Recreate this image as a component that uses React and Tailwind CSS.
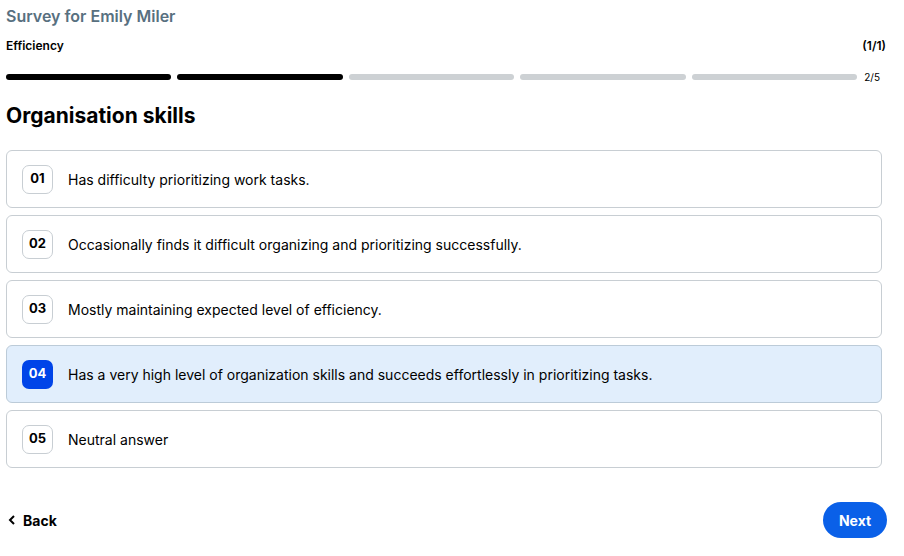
import { useState } from 'react'

const options = [
    { id: '01', text: 'Has difficulty prioritizing work tasks.' },
    { id: '02', text: 'Occasionally finds it difficult organizing and prioritizing successfully.' },
    { id: '03', text: 'Mostly maintaining expected level of efficiency.' },
    { id: '04', text: 'Has a very high level of organization skills and succeeds effortlessly in prioritizing tasks.' },
    { id: '05', text: 'Neutral answer' },
]

const steps = [true, true, false, false, false]

export default function App() {
    const [selected, setSelected] = useState('04')

    return (
        <div className="w-[904px] h-[556px] bg-white px-[6px] pt-[6px] font-['Inter','Liberation_Sans',sans-serif] text-black flex flex-col">
            <h2 className="text-[16px] font-semibold text-[#587080] leading-5">Survey for Emily Miler</h2>

            <div className="flex justify-between items-center mt-[12px] pr-[12px]">
                <span className="text-[12px] font-semibold leading-4">Efficiency</span>
                <span className="text-[12px] font-semibold leading-4">(1/1)</span>
            </div>

            {/* progress */}
            <div className="flex items-center mt-[17px] pr-[18px]">
                <div className="flex gap-[6px] flex-1">
                    {steps.map((done, i) => (
                        <div key={i} className={`h-[6px] flex-1 rounded-full ${done ? 'bg-black' : 'bg-[#cdd1d4]'}`} />
                    ))}
                </div>
                <span className="text-[10px] ml-[7px] leading-3">2/5</span>
            </div>

            <h1 className="text-[21px] font-bold leading-7 mt-[19px]">Organisation skills</h1>

            <div className="flex flex-col gap-[7px] mt-[20px] pr-[16px]">
                {options.map((o) => {
                    const active = o.id === selected
                    return (
                        <button
                            key={o.id}
                            onClick={() => setSelected(o.id)}
                            className={`flex items-center h-[58px] rounded-[6px] border text-left pl-[15px] ${active ? 'bg-[#e1eefc] border-[#bccbd8]' : 'bg-white border-[#c8ced3]'}`}
                        >
                            <span className={`w-[31px] h-[29px] flex items-center justify-center rounded-[7px] text-[13px] font-bold ${active ? 'bg-[#0044e8] text-white' : 'border border-[#c8ced3]'}`}>
                                {o.id}
                            </span>
                            <span className="ml-[15px] text-[14px]">{o.text}</span>
                        </button>
                    )
                })}
            </div>

            <div className="flex justify-between items-center mt-[34px] pr-[11px]">
                <button className="flex items-center gap-[7px] pl-[2px] text-[14px] font-bold">
                    <svg width="8" height="10" viewBox="0 0 8 10" fill="none">
                        <path d="M6 1L2 5l4 4" stroke="black" strokeWidth="2" />
                    </svg>
                    Back
                </button>
                <button className="h-[36px] w-[64px] rounded-full bg-[#0a60e8] text-white text-[14px] font-bold">Next</button>
            </div>
        </div>
    )
}
